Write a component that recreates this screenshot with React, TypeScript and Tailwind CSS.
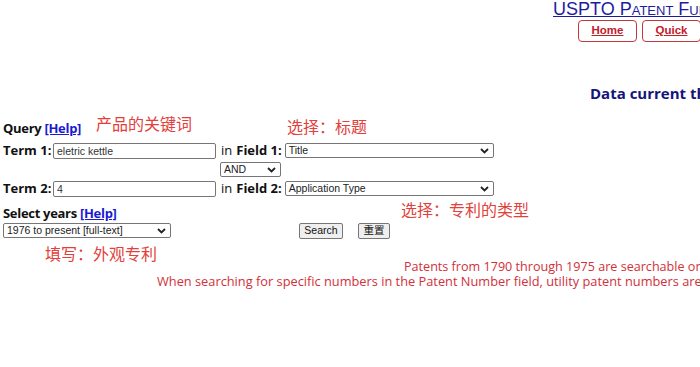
import React from "react";

const ui = { fontFamily: '"Open Sans", "Noto Sans", sans-serif' };
const arial = { fontFamily: '"Liberation Sans", Arial, sans-serif' };
const cjk = { fontFamily: '"Noto Sans CJK SC", sans-serif' };

function Chevron() {
  return (
    <svg width="9" height="6" viewBox="0 0 9 6" className="shrink-0">
      <polyline points="1,1 4.5,4.5 8,1" fill="none" stroke="#222" strokeWidth="1.8" />
    </svg>
  );
}

function FakeSelect({ value, width }: { value: string; width: string }) {
  return (
    <div
      className={`${width} h-[15px] flex items-center justify-between border border-[#767676] rounded-[2px] bg-white pl-[3px] pr-[4px] text-[10.5px] leading-none text-[#222]`}
      style={arial}
    >
      <span>{value}</span>
      <Chevron />
    </div>
  );
}

function Note({ children, className = "" }: { children: React.ReactNode; className?: string }) {
  return (
    <span className={`text-[16px] leading-[18px] text-[#e2403a] whitespace-nowrap ${className}`} style={cjk}>
      {children}
    </span>
  );
}

export default function App() {
  return (
    <div className="w-[700px] h-[367px] overflow-hidden bg-white whitespace-nowrap" style={ui}>
      <div className="pl-[553px] pt-[1px]">
        <a
          href="#"
          className="block text-[18px] leading-[16px] text-[#1c1ca0] underline [font-variant:small-caps]"
          style={arial}
        >
          USPTO Patent Full-Text and Image Database
        </a>
        <div className="flex gap-[5px] pl-[25px] pt-[3px]">
          {["Home", "Quick", "Advanced"].map((t) => (
            <div
              key={t}
              className="w-[59px] h-[22px] shrink-0 border border-[#c0393b] rounded-[4px] flex items-center justify-center"
            >
              <a href="#" className="text-[11.5px] font-bold text-[#c0202a] underline" style={arial}>
                {t}
              </a>
            </div>
          ))}
        </div>
      </div>

      <div className="pl-[590px] pt-[41px] text-[15px] leading-[20px] font-bold text-[#14147a]">
        Data current through March 2021
      </div>

      <div className="pt-[9px]">
        <div className="flex items-end h-[25px]">
          <span className="pl-[3px] text-[13px] font-bold leading-[18px] text-[#111] tracking-[-0.3px]">
            Query <a href="#" className="text-[#1a1ad0] underline">[Help]</a>
          </span>
          <Note className="ml-[15px] mb-[5px]">产品的关键词</Note>
          <Note className="ml-[95px] mb-[2px]">选择：标题</Note>
        </div>

        <div className="flex items-center h-[19px] mt-[4px] text-[13px] text-[#111]">
          <span className="pl-[3px] w-[53px] font-bold">Term 1:</span>
          <div
            className="w-[163px] h-[16px] border border-[#767676] rounded-[2px] pl-[3px] text-[10.5px] leading-[14px] text-[#333]"
            style={arial}
          >
            eletric kettle
          </div>
          <span className="ml-[5px]">in</span>
          <span className="ml-[4px] font-bold">Field 1:</span>
          <div className="ml-[3px]">
            <FakeSelect value="Title" width="w-[209px]" />
          </div>
        </div>

        <div className="flex h-[15px] mt-[2px] pl-[220px]">
          <FakeSelect value="AND" width="w-[61px]" />
        </div>

        <div className="flex items-center h-[19px] mt-[2px] text-[13px] text-[#111]">
          <span className="pl-[3px] w-[53px] font-bold">Term 2:</span>
          <div
            className="w-[163px] h-[16px] border border-[#767676] rounded-[2px] pl-[3px] text-[10.5px] leading-[14px] text-[#333]"
            style={arial}
          >
            4
          </div>
          <span className="ml-[5px]">in</span>
          <span className="ml-[4px] font-bold">Field 2:</span>
          <div className="ml-[3px]">
            <FakeSelect value="Application Type" width="w-[209px]" />
          </div>
        </div>

        <div className="flex items-end h-[24px]">
          <span className="pl-[3px] w-[401px] text-[13px] font-bold leading-[18px] text-[#111] tracking-[-0.3px]">
            Select years <a href="#" className="text-[#1a1ad0] underline">[Help]</a>
          </span>
          <Note className="mb-[4px]">选择：专利的类型</Note>
        </div>

        <div className="flex items-center h-[17px]">
          <div className="pl-[3px]">
            <FakeSelect value="1976 to present [full-text]" width="w-[168px]" />
          </div>
          <button
            className="ml-[128px] w-[44px] h-[16px] border border-[#767676] rounded-[2px] bg-[#efefef] text-[10.5px] leading-none text-[#111]"
            style={arial}
          >
            Search
          </button>
          <button
            className="ml-[15px] w-[32px] h-[16px] border border-[#767676] rounded-[2px] bg-[#efefef] text-[10.5px] leading-none text-[#111]"
            style={cjk}
          >
            重置
          </button>
        </div>

        <div className="pl-[45px] h-[20px] mt-[3px]">
          <Note>填写：外观专利</Note>
        </div>

        <div className="pl-[404px] -mt-[3px] text-[12.6px] leading-[15px] text-[#d2303a]">
          Patents from 1790 through 1975 are searchable only by Issue Date, Patent Number, and Current US Classification.
        </div>
        <div className="pl-[157px] text-[12.8px] leading-[15px] text-[#d2303a]">
          When searching for specific numbers in the Patent Number field, utility patent numbers are entered as one to eight numbers in length.
        </div>
      </div>
    </div>
  );
}
